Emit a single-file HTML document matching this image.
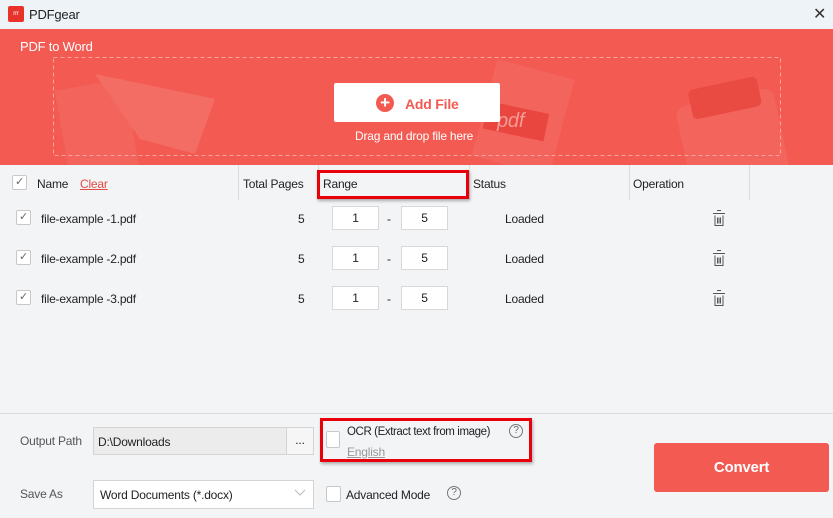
<!DOCTYPE html>
<html><head><meta charset="utf-8"><style>
*{margin:0;padding:0;box-sizing:border-box}
body{width:833px;height:518px;position:relative;overflow:hidden;background:#f3f4f6;font-family:"Liberation Sans",sans-serif;font-size:12px;color:#222;letter-spacing:-0.2px}
.a{position:absolute;white-space:nowrap}
.cb{position:absolute;width:15px;height:15px;border:1px solid #c8c8c8;background:#fff;border-radius:2px;font-size:11px;color:#666;text-align:center;line-height:13px}
.in{position:absolute;width:47px;height:24px;background:#fff;border:1px solid #d8d8d8;text-align:center;line-height:22px}
.sep{position:absolute;top:165px;width:1px;height:35px;background:#dcdcdc}
</style></head><body>
<div class="a" style="left:0;top:0;width:833px;height:29px;background:#eef3f8"></div>
<div class="a" style="left:8px;top:6px;width:16px;height:16px;background:#e8332b;border-radius:2px;color:#fff;font-size:6px;line-height:16px;text-align:center">rrr</div>
<div class="a" style="left:29px;top:7px;font-size:13px">PDFgear</div>
<div class="a" style="left:813px;top:4px;font-size:16px;color:#333">✕</div>
<div class="a" style="left:0;top:29px;width:833px;height:136px;background:#f25a52;overflow:hidden">
 <svg width="833" height="136" style="position:absolute;left:0;top:0">
  <g fill="#f3645c">
   <rect x="62" y="55" width="70" height="90" transform="rotate(-10 97 100)"/>
   <rect x="483" y="40" width="80" height="100" transform="rotate(15 528 90)"/>
   <rect x="680" y="70" width="100" height="90" rx="10" transform="rotate(-12 720 100)"/>
  </g>
  <polygon points="95,45 215,70 195,125 140,110" fill="#f46d65"/>
  <rect x="690" y="55" width="70" height="30" rx="5" fill="#e94a42" transform="rotate(-12 720 70)"/>
  <rect x="485" y="78" width="62" height="28" fill="#e8463e" transform="rotate(12 515 92)"/>
  <text x="497" y="98" fill="#f59a94" font-size="20" font-style="italic" font-family="Liberation Sans">pdf</text>
  <rect x="53.5" y="28.5" width="727" height="98" fill="none" stroke="#f8a39e" stroke-dasharray="4 3"/>
 </svg>
</div>
<div class="a" style="left:20px;top:39px;font-size:13px;color:#fff">PDF to Word</div>
<div class="a" style="left:334px;top:83px;width:166px;height:39px;background:#fff;border-radius:2px"></div>
<div class="a" style="left:376px;top:94px;width:18px;height:18px;border-radius:50%;background:#f25a52;color:#fff;font-size:17px;line-height:18px;text-align:center;font-weight:bold">+</div>
<div class="a" style="left:405px;top:96px;font-size:14px;font-weight:bold;color:#f25a52">Add File</div>
<div class="a" style="left:355px;top:129px;color:#fff">Drag and drop file here</div>

<div class="sep" style="left:238px"></div><div class="sep" style="left:318px"></div><div class="sep" style="left:469px"></div><div class="sep" style="left:629px"></div><div class="sep" style="left:749px"></div>
<div class="cb" style="left:12px;top:175px">✓</div>
<div class="a" style="left:37px;top:177px">Name</div>
<div class="a" style="left:80px;top:177px;color:#e04a44;text-decoration:underline">Clear</div>
<div class="a" style="left:243px;top:177px">Total Pages</div>
<div class="a" style="left:323px;top:177px">Range</div>
<div class="a" style="left:473px;top:177px">Status</div>
<div class="a" style="left:633px;top:177px">Operation</div>
<div class="a" style="left:317px;top:170px;width:152px;height:29px;border:3px solid #e8000b;box-shadow:1px 2px 3px rgba(0,0,0,.3)"></div>

<div class="cb" style="left:16px;top:210px">✓</div><div class="a" style="left:41px;top:212px">file-example -1.pdf</div><div class="a" style="left:298px;top:212px">5</div><div class="in" style="left:332px;top:206px">1</div><div class="a" style="left:387px;top:212px">-</div><div class="in" style="left:401px;top:206px">5</div><div class="a" style="left:505px;top:212px">Loaded</div>
<div class="cb" style="left:16px;top:250px">✓</div><div class="a" style="left:41px;top:252px">file-example -2.pdf</div><div class="a" style="left:298px;top:252px">5</div><div class="in" style="left:332px;top:246px">1</div><div class="a" style="left:387px;top:252px">-</div><div class="in" style="left:401px;top:246px">5</div><div class="a" style="left:505px;top:252px">Loaded</div>
<div class="cb" style="left:16px;top:290px">✓</div><div class="a" style="left:41px;top:292px">file-example -3.pdf</div><div class="a" style="left:298px;top:292px">5</div><div class="in" style="left:332px;top:286px">1</div><div class="a" style="left:387px;top:292px">-</div><div class="in" style="left:401px;top:286px">5</div><div class="a" style="left:505px;top:292px">Loaded</div>
<svg class="a" style="left:712px;top:209px" width="14" height="18"><g fill="none" stroke="#555" stroke-width="1"><path d="M5 1.5h4M1 4.5h12M3 6.5v10h8v-10M5.5 8.5v6M7 8.5v6M8.5 8.5v6"/></g></svg>
<svg class="a" style="left:712px;top:249px" width="14" height="18"><g fill="none" stroke="#555" stroke-width="1"><path d="M5 1.5h4M1 4.5h12M3 6.5v10h8v-10M5.5 8.5v6M7 8.5v6M8.5 8.5v6"/></g></svg>
<svg class="a" style="left:712px;top:289px" width="14" height="18"><g fill="none" stroke="#555" stroke-width="1"><path d="M5 1.5h4M1 4.5h12M3 6.5v10h8v-10M5.5 8.5v6M7 8.5v6M8.5 8.5v6"/></g></svg>

<div class="a" style="left:0;top:413px;width:833px;height:1px;background:#dcdcdc"></div>
<div class="a" style="left:20px;top:434px;color:#555">Output Path</div>
<div class="a" style="left:93px;top:427px;width:194px;height:28px;background:#ececec;border:1px solid #d4d4d4;padding:7px 4px">D:\Downloads</div>
<div class="a" style="left:286px;top:427px;width:28px;height:28px;background:#f6f6f6;border:1px solid #d4d4d4;text-align:center;line-height:24px">...</div>
<div class="a" style="left:320px;top:418px;width:212px;height:44px;border:3px solid #e8000b;box-shadow:1px 2px 3px rgba(0,0,0,.3)"></div>
<div class="cb" style="left:326px;top:431px;height:17px;width:14px"></div>
<div class="a" style="left:347px;top:426px;font-size:11.5px;letter-spacing:-0.4px">OCR (Extract text from image)</div>
<div class="a" style="left:509px;top:424px;width:14px;height:14px;border:1px solid #777;border-radius:50%;font-size:10px;line-height:12px;text-align:center;color:#666">?</div>
<div class="a" style="left:347px;top:445px;color:#999;text-decoration:underline">English</div>
<div class="a" style="left:654px;top:443px;width:175px;height:49px;background:#f25a52;border-radius:3px;color:#fff;font-size:15px;font-weight:bold;text-align:center;line-height:49px">Convert</div>
<div class="a" style="left:20px;top:487px;color:#555">Save As</div>
<div class="a" style="left:93px;top:480px;width:221px;height:29px;background:#fff;border:1px solid #d4d4d4;padding:7px 6px">Word Documents (*.docx)</div>
<svg class="a" style="left:294px;top:489px" width="12" height="8"><path d="M1 1l5 5 5-5" fill="none" stroke="#bbb"/></svg>
<div class="cb" style="left:326px;top:486px;height:16px"></div>
<div class="a" style="left:346px;top:488px">Advanced Mode</div>
<div class="a" style="left:447px;top:486px;width:14px;height:14px;border:1px solid #777;border-radius:50%;font-size:10px;line-height:12px;text-align:center;color:#666">?</div>
</body></html>
